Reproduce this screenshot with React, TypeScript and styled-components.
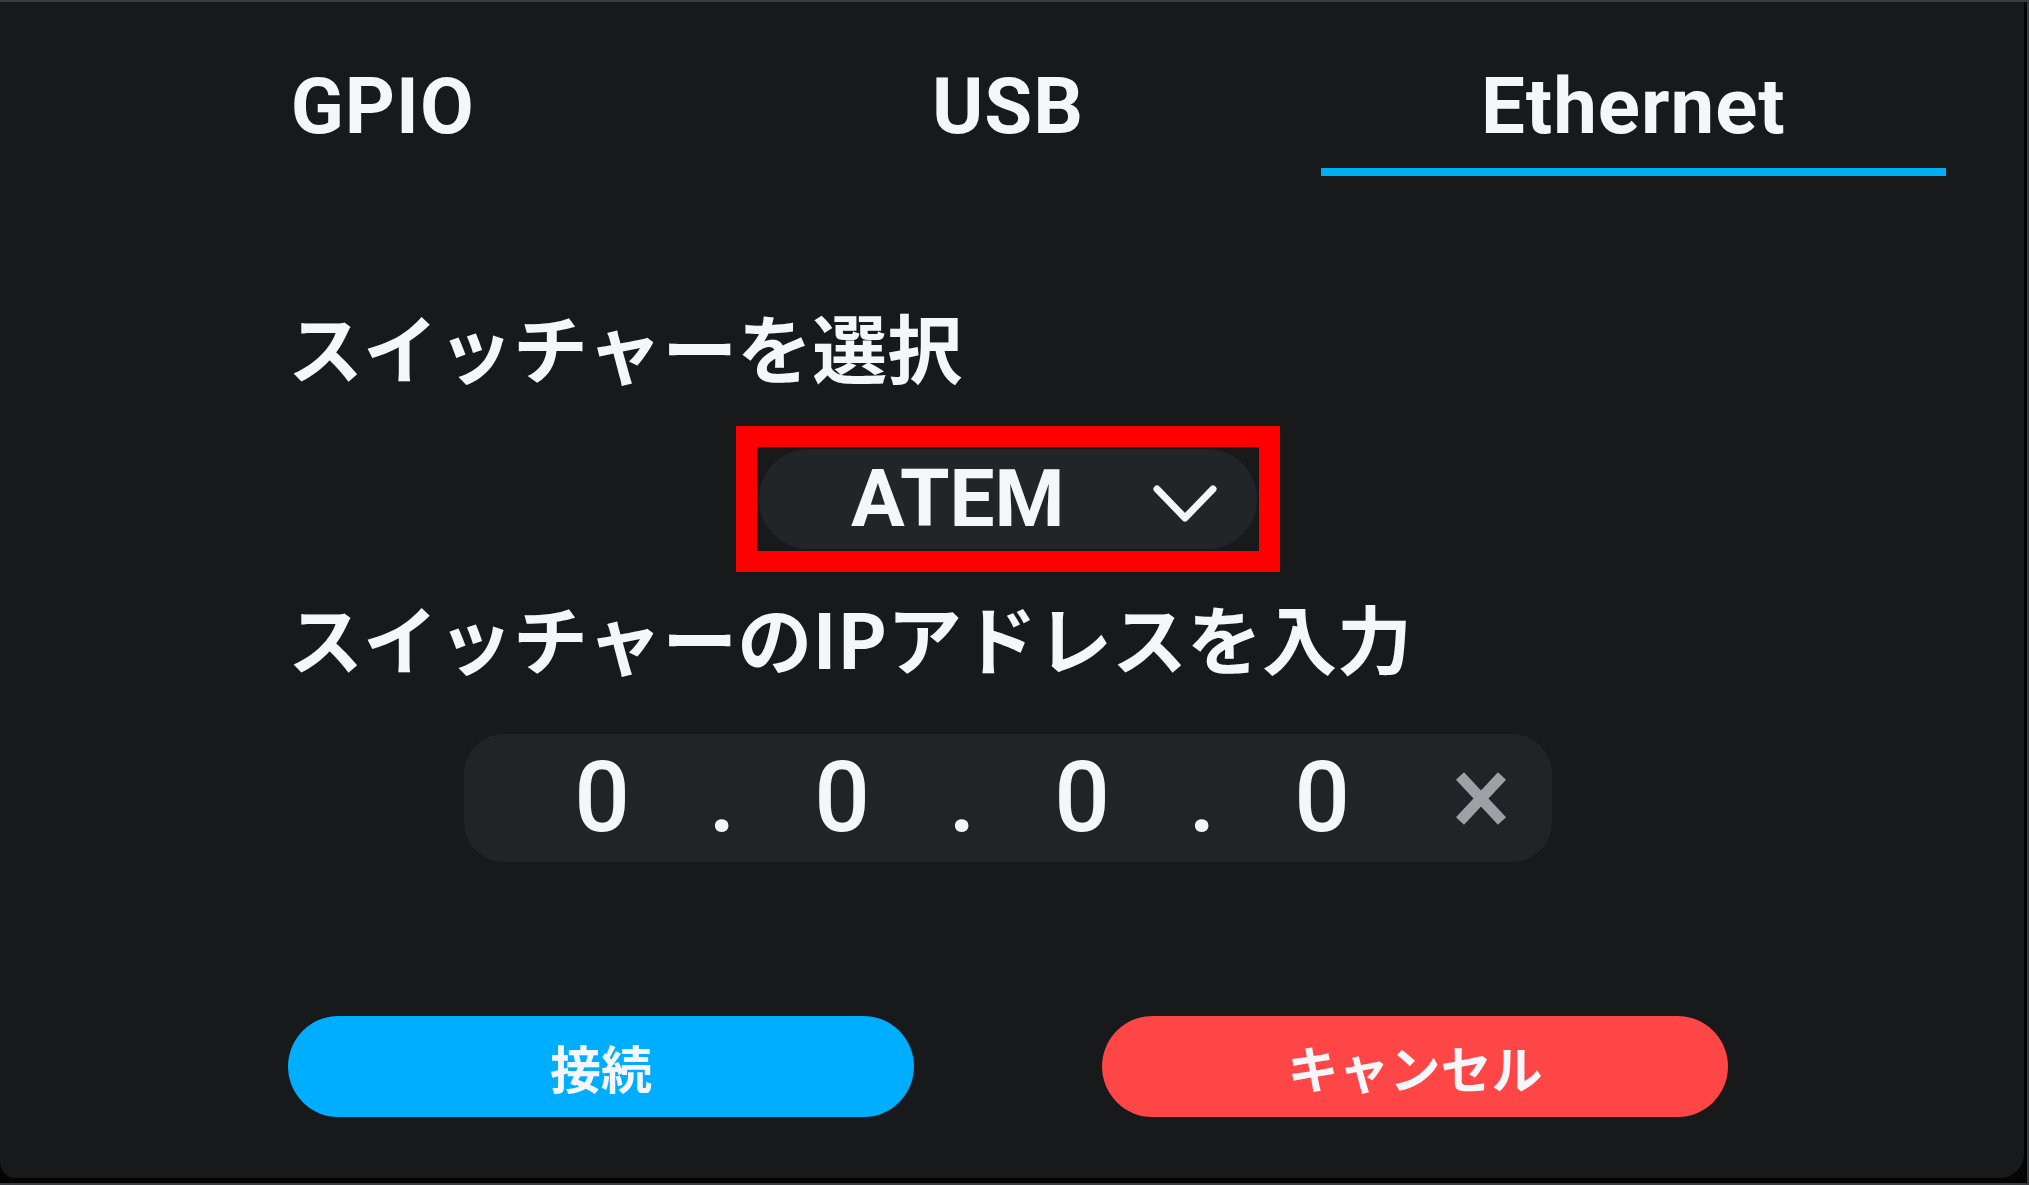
import React from "react";
import styled, { createGlobalStyle } from "styled-components";

const GlobalStyle = createGlobalStyle`
  html, body {
    margin: 0;
    padding: 0;
    background: #3c3d3f;
  }
  * {
    box-sizing: border-box;
  }
`;

const tabs = ["GPIO", "USB", "Ethernet"];
const octets = ["0", "0", "0", "0"];

const App = () => {
  return (
    <>
      <GlobalStyle />
      <Screen>
        <Backdrop>
          <Panel>
            <TabBar>
              {tabs.map((t) => (
                <Tab key={t}>
                  <TabLabel>{t}</TabLabel>
                  <TabLine active={t === "Ethernet"} />
                </Tab>
              ))}
            </TabBar>

            <Content>
              <Heading top={132}>スイッチャーを選択</Heading>

              <Highlight>
                <Select>
                  <SelectValue>ATEM</SelectValue>
                  <Chevron viewBox="0 0 64 38">
                    <path
                      d="M4 4 L32 33 L60 4"
                      fill="none"
                      stroke="#f4f6f8"
                      strokeWidth="7"
                      strokeLinecap="round"
                      strokeLinejoin="round"
                    />
                  </Chevron>
                </Select>
              </Highlight>

              <Heading top={27}>スイッチャーのIPアドレスを入力</Heading>

              <IpField>
                {octets.map((o, i) => (
                  <React.Fragment key={i}>
                    {i > 0 && <IpCell>.</IpCell>}
                    <IpCell>{o}</IpCell>
                  </React.Fragment>
                ))}
                <ClearIcon viewBox="0 0 54 57">
                  <path
                    d="M6 6 L48 51 M48 6 L6 51"
                    fill="none"
                    stroke="#9ca1a6"
                    strokeWidth="11"
                  />
                </ClearIcon>
              </IpField>

              <ButtonRow>
                <ActionButton bg="#00aeff">接続</ActionButton>
                <ActionButton bg="#ff4646">キャンセル</ActionButton>
              </ButtonRow>
            </Content>
          </Panel>
        </Backdrop>
      </Screen>
    </>
  );
};

export default App;

const Screen = styled.div`
  width: 2029px;
  height: 1185px;
  padding: 2px 2px 2px 0;
  background: #3c3d3f;
`;

const Backdrop = styled.div`
  width: 100%;
  height: 100%;
  padding: 0 3px 5px 0;
  background: #050505;
`;

const Panel = styled.div`
  width: 100%;
  height: 100%;
  background: #18191b;
  border-radius: 0 0 24px 16px;
  padding: 66px 78px 0 70px;
  display: flex;
  flex-direction: column;
`;

const TabBar = styled.div`
  display: grid;
  grid-template-columns: repeat(3, 1fr);
`;

const Tab = styled.div`
  display: flex;
  flex-direction: column;
  align-items: center;
`;

const TabLabel = styled.div`
  font-family: Roboto, "Liberation Sans", sans-serif;
  font-weight: 700;
  font-size: 78px;
  line-height: 78px;
  letter-spacing: 1px;
  color: #f4f6f9;
`;

const TabLine = styled.div<{ active?: boolean }>`
  width: 100%;
  height: 8px;
  margin-top: 22px;
  background: ${(p) => (p.active ? "#00aef5" : "transparent")};
`;

const Content = styled.div`
  width: 1440px;
  align-self: center;
  display: flex;
  flex-direction: column;
  align-items: center;
`;

const Heading = styled.div<{ top: number }>`
  align-self: stretch;
  margin-top: ${(p) => p.top}px;
  font-family: "Noto Sans CJK JP", sans-serif;
  font-weight: 700;
  font-size: 75px;
  line-height: 75px;
  color: #f4f6f9;
  white-space: nowrap;
`;

const Highlight = styled.div`
  margin-top: 43px;
  border: 21px solid #ff0000;
  width: 544px;
  height: 146px;
  display: flex;
  align-items: center;
  justify-content: center;
`;

const Select = styled.div`
  width: 498px;
  height: 100px;
  border-radius: 50px;
  background: #222527;
  display: flex;
  align-items: center;
  padding-left: 92px;
`;

const SelectValue = styled.span`
  font-family: Roboto, "Liberation Sans", sans-serif;
  font-weight: 700;
  font-size: 80px;
  line-height: 80px;
  color: #f4f6f9;
`;

const Chevron = styled.svg`
  width: 64px;
  height: 38px;
  margin-left: 88px;
  margin-top: 10px;
`;

const IpField = styled.div`
  margin-top: 60px;
  width: 1088px;
  height: 128px;
  border-radius: 40px;
  background: #212426;
  display: flex;
  align-items: center;
  padding-left: 78px;
`;

const IpCell = styled.span`
  width: 120px;
  text-align: center;
  font-family: Roboto, "Liberation Sans", sans-serif;
  font-weight: 500;
  font-size: 98px;
  line-height: 98px;
  color: #f4f6f9;
`;

const ClearIcon = styled.svg`
  width: 54px;
  height: 57px;
  margin-left: 72px;
`;

const ButtonRow = styled.div`
  margin-top: 154px;
  display: flex;
  gap: 188px;
`;

const ActionButton = styled.button<{ bg: string }>`
  width: 626px;
  height: 101px;
  border: none;
  border-radius: 51px;
  background: ${(p) => p.bg};
  color: #f4f6f9;
  font-family: "Noto Sans CJK JP", sans-serif;
  font-weight: 700;
  font-size: 51px;
  display: flex;
  align-items: center;
  justify-content: center;
  padding: 0;
`;
